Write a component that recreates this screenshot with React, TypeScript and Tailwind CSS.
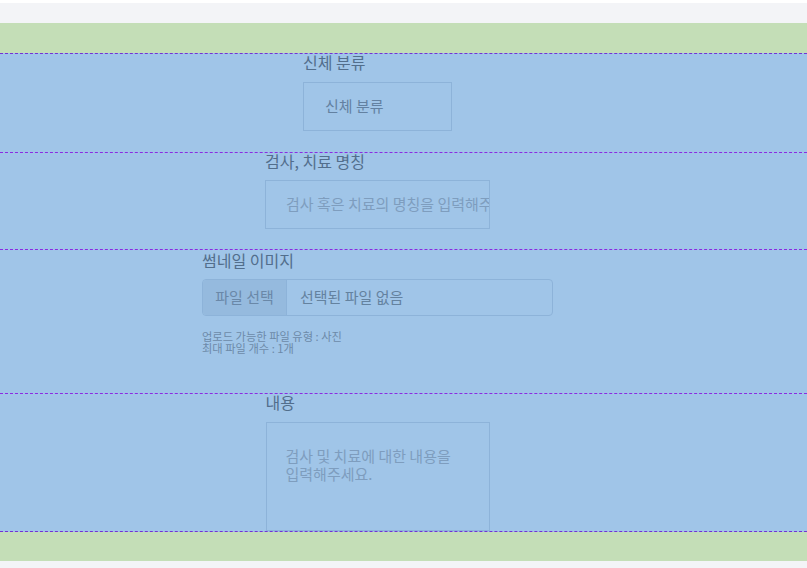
import React from "react";

function EdgeLine() {
  return <div className="h-0 border-t border-dashed border-[#7332d4]" />;
}

function MidLine() {
  return <div className="h-0 border-t border-dashed border-[#8a2be2]" />;
}

export default function App() {
  return (
    <div className="w-[807px] h-[568px] overflow-hidden bg-white font-['Noto_Sans_CJK_KR','Noto_Sans',sans-serif]">
      <div className="h-[3px] bg-white" />
      <div className="h-[20px] bg-[#f3f4f7]" />
      <div className="h-[30px] bg-[#c4deb7]" />
      <div className="bg-[#a0c5e8]">
        <EdgeLine />
        {/* Section 1 */}
        <div className="h-[98px] flex flex-col items-center pr-[52px]">
          <div className="flex flex-col w-[149px]">
            <div className="text-[16px] leading-[16px] font-normal text-[#526e8c] whitespace-nowrap">신체 분류</div>
            <div className="mt-[12px] h-[49px] border border-[#8db3d9] flex items-center pl-[21px] text-[15px] text-[#6381a1] whitespace-nowrap">
              신체 분류
            </div>
          </div>
        </div>
        <MidLine />
        {/* Section 2 */}
        <div className="h-[96px] flex flex-col items-center pr-[52px]">
          <div className="flex flex-col w-[225px]">
            <div className="text-[16px] leading-[16px] font-normal text-[#526e8c] whitespace-nowrap">검사, 치료 명칭</div>
            <div className="mt-[11px] h-[49px] border border-[#8db3d9] flex items-center pl-[20px] text-[15px] text-[#7e9dbe] whitespace-nowrap overflow-hidden">
              검사 혹은 치료의 명칭을 입력해주세요.
            </div>
          </div>
        </div>
        <MidLine />
        {/* Section 3 */}
        <div className="h-[143px] flex flex-col items-center pr-[52px]">
          <div className="flex flex-col w-[351px] pt-[2px]">
            <div className="text-[16px] leading-[16px] font-normal text-[#526e8c] whitespace-nowrap">썸네일 이미지</div>
            <div className="mt-[11px] h-[37px] rounded-[4px] border border-[#8db3d9] flex overflow-hidden text-[15px]">
              <div className="w-[84px] bg-[#95bade] border-r border-[#8db3d9] flex items-center justify-center text-[#6a88a8] whitespace-nowrap">
                파일 선택
              </div>
              <div className="flex items-center pl-[13px] text-[#64829f] whitespace-nowrap">선택된 파일 없음</div>
            </div>
            <div className="mt-[14px] text-[11.25px] leading-[12px] text-[#6d8aa9] whitespace-nowrap">
              <div>업로드 가능한 파일 유형 : 사진</div>
              <div>최대 파일 개수 : 1개</div>
            </div>
          </div>
        </div>
        <MidLine />
        {/* Section 4 */}
        <div className="h-[137px] flex flex-col items-center pr-[52px]">
          <div className="flex flex-col w-[224px]">
            <div className="text-[16px] leading-[16px] font-normal text-[#526e8c] whitespace-nowrap">내용</div>
            <div className="mt-[12px] h-[109px] border border-[#8db3d9] pl-[19px] pr-[20px] pt-[24px] text-[15px] leading-[18px] text-[#7e9dbe] break-keep">
              검사 및 치료에 대한 내용을 입력해주세요.
            </div>
          </div>
        </div>
        <EdgeLine />
      </div>
      <div className="h-[29px] bg-[#c4deb7]" />
      <div className="h-[7px] bg-[#f3f4f7]" />
    </div>
  );
}
